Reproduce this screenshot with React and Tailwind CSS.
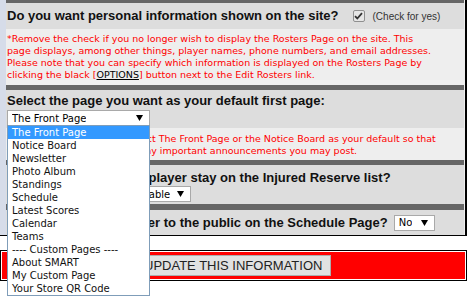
const PAGES = [
  'The Front Page', 'Notice Board', 'Newsletter', 'Photo Album', 'Standings',
  'Schedule', 'Latest Scores', 'Calendar', 'Teams', '---- Custom Pages ----',
  'About SMART', 'My Custom Page', 'Your Store QR Code',
];

const HEAD = "font-['Liberation_Sans',Arial,sans-serif] font-bold text-[13px] text-[#111]";
const NOTE = "font-['DejaVu_Sans',Verdana,sans-serif] text-[9.5px] leading-[12px] text-[#ff0000]";

function Arrow() {
  return (
    <svg width="7" height="6" viewBox="0 0 7 6" className="shrink-0">
      <path d="M0 0h7L3.5 6z" fill="#000" />
    </svg>
  );
}

function Select({ label, className }) {
  return (
    <div className={`flex items-center justify-between bg-white border border-[#a9a9a9] pl-[4px] pr-[6px] font-['DejaVu_Sans',Verdana,sans-serif] text-[10px] text-black ${className}`}>
      <span className="truncate">{label}</span>
      <Arrow />
    </div>
  );
}

function Sep({ h = 'h-[5px]' }) {
  return <div className={`${h} bg-[#666]`} />;
}

export default function App() {
  return (
    <div className="relative w-[470px] h-[306px] overflow-hidden bg-white">
      {/* main form table */}
      <div className="w-[467px] flex border-r-2 border-b border-black">
        <div className="w-[6px] bg-[#d6dce9]" />
        <div className="flex-1 flex flex-col border-r border-[#eee]">
          <Sep h="h-[3px]" />

          {/* personal info */}
          <div className="h-[26px] bg-[#ddd] flex items-center pl-[1px]">
            <span className={HEAD}>Do you want personal information shown on the site?</span>
            <div className="ml-[14px] w-[12px] h-[12px] rounded-[2px] border border-[#8f8f8f] bg-[#e6e6e6] flex items-center justify-center">
              <svg width="9" height="8" viewBox="0 0 9 8">
                <path d="M1 4.2l2.3 2.3L8 1.2" stroke="#333" strokeWidth="1.8" fill="none" />
              </svg>
            </div>
            <span className="ml-[8px] font-['Liberation_Sans',Arial,sans-serif] text-[10px] text-[#333]">(Check for yes)</span>
          </div>
          <div className={`h-[56px] bg-[#eee] pl-[1px] pt-[4px] ${NOTE}`}>
            *Remove the check if you no longer wish to display the Rosters Page on the site. This<br />
            page displays, among other things, player names, phone numbers, and email addresses.<br />
            Please note that you can specify which information is displayed on the Rosters Page by<br />
            clicking the black [<span className="text-black underline">OPTIONS</span>] button next to the Edit Rosters link.
          </div>
          <Sep />

          {/* default first page */}
          <div className="h-[38px] bg-[#ddd] pl-[1px] pt-[3px]">
            <div className={`${HEAD} leading-[16px]`}>Select the page you want as your default first page:</div>
            <Select label="The Front Page" className="mt-[1px] w-[143px] h-[16px] border-[#7eb4ea]" />
          </div>
          <div className={`h-[32px] bg-[#eee] pl-[1px] pt-[5px] ${NOTE}`}>
            We recommend that you select The Front Page or the Notice Board as your default so that<br />
            your players will surely see any important announcements you may post.
          </div>
          <Sep />

          {/* injured reserve */}
          <div className="h-[39px] bg-[#ddd] pl-[1px] pt-[5px]">
            <div className={`${HEAD} leading-[16px]`}>How long should each player stay on the Injured Reserve list?</div>
            <Select label="Until removed from the IR table" className="w-[184px] h-[16px] text-[9.5px]" />
          </div>
          <Sep h="h-[6px]" />

          {/* schedule */}
          <div className="h-[25px] bg-[#ddd] pl-[1px] flex items-center">
            <span className={HEAD}>Show the game manager to the public on the Schedule Page?</span>
            <Select label="No" className="ml-[6px] w-[41px] h-[16px] text-[8px]" />
          </div>
        </div>
      </div>

      {/* submit */}
      <div className="mt-[14px] w-[467px] border border-black p-[1px] bg-white">
        <div className="h-[27px] bg-[#ff0000] flex items-center pl-[133px]">
          <button className="h-[21px] px-[8px] bg-[#e1e1e1] border border-[#adadad] font-['Liberation_Sans',Arial,sans-serif] text-[13px] text-[#222]">
            UPDATE THIS INFORMATION
          </button>
        </div>
      </div>

      {/* open dropdown list */}
      <div className="absolute left-[7px] top-[125px] w-[143px] bg-white border border-[#7f9db9]">
        {PAGES.map((p, i) => (
          <div
            key={p}
            className={`h-[13px] leading-[13px] pl-[4px] font-['DejaVu_Sans',Verdana,sans-serif] text-[10px] whitespace-nowrap ${i === 0 ? 'bg-[#3399ff] text-white' : 'text-[#111]'}`}
          >
            {p}
          </div>
        ))}
      </div>
    </div>
  );
}
